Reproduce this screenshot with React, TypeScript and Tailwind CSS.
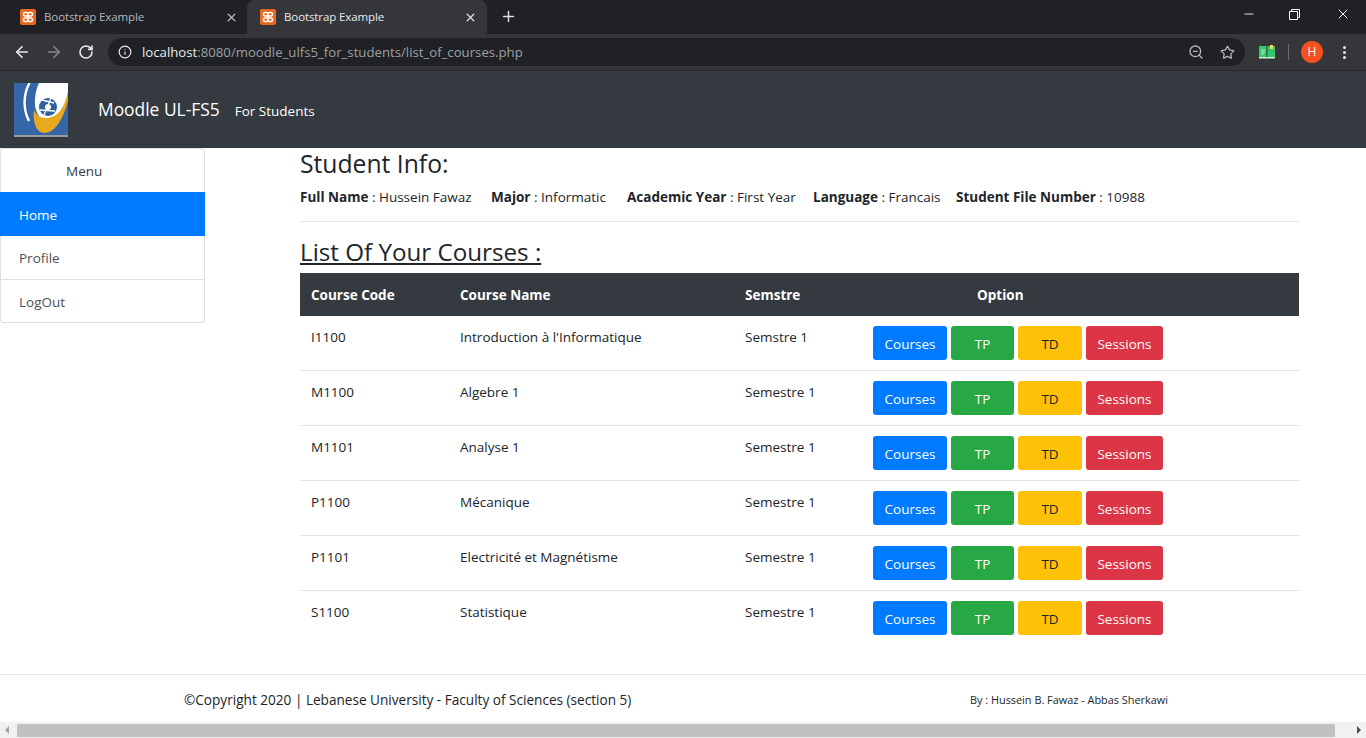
import { ArrowLeft, ArrowRight, Info, Minus, Plus, RotateCw, Star, X, ZoomOut } from 'lucide-react';

const courses = [
  { code: 'I1100', name: "Introduction à l'Informatique", semester: 'Semstre 1' },
  { code: 'M1100', name: 'Algebre 1', semester: 'Semestre 1' },
  { code: 'M1101', name: 'Analyse 1', semester: 'Semestre 1' },
  { code: 'P1100', name: 'Mécanique', semester: 'Semestre 1' },
  { code: 'P1101', name: 'Electricité et Magnétisme', semester: 'Semestre 1' },
  { code: 'S1100', name: 'Statistique', semester: 'Semestre 1' },
];

function Favicon() {
  return (
    <svg width="16" height="16" viewBox="0 0 16 16" className="shrink-0">
      <rect width="16" height="16" rx="2" fill="#e8691f" />
      <path d="M5 3.5h1.5a1.5 1.5 0 0 1 1.5 1.5v6a1.5 1.5 0 0 0 1.5 1.5H11a1.5 1.5 0 0 0 1.5-1.5v-.5A1.5 1.5 0 0 0 11 9H5a1.5 1.5 0 0 0-1.5 1.5v.5A1.5 1.5 0 0 0 5 12.5h1.5A1.5 1.5 0 0 0 8 11V5a1.5 1.5 0 0 1 1.5-1.5H11A1.5 1.5 0 0 1 12.5 5v.5A1.5 1.5 0 0 1 11 7H5a1.5 1.5 0 0 1-1.5-1.5V5A1.5 1.5 0 0 1 5 3.5Z" fill="none" stroke="#fff" strokeWidth="1.5" />
    </svg>
  );
}

function Logo() {
  return (
    <svg width="54" height="54" viewBox="0 0 54 54" className="shrink-0">
      <rect width="54" height="54" fill="#ffffff" />
      <rect y="0" width="54" height="52" fill="#3566a8" />
      <path d="M25 0 H54 V10 C50 28 42 38 32 38 C24 36 20 26 21 16 C21.5 9 23 4 25 0 Z" fill="#ffffff" />
      <path d="M15.5 0 C9 12 9 26 15 38" fill="none" stroke="#ffffff" strokeWidth="2.4" />
      <path d="M54 8 C51 25 43 35 32 35 C26 35 22 32 20 27 C18 39 23 50 30 50 C43 50 50 32 54 18 Z" fill="#e9a91c" />
      <circle cx="34" cy="24" r="9" fill="#2f619f" />
      <circle cx="34" cy="24" r="3" fill="#ffffff" />
      <path d="M28 17 L40 20 M30 32 L37 15 M26 27 L41 28" stroke="#ffffff" strokeWidth="1.3" />
      <rect y="52" width="54" height="2" fill="#9a9a9a" />
    </svg>
  );
}

function BookIcon() {
  return (
    <svg width="16" height="14" viewBox="0 0 16 14">
      <path d="M0 1h7.5v11H0zM8.5 1H16v11H8.5z" fill="#34c66a" />
      <path d="M0 12h16v1.5H0z" fill="#c8f5d6" />
      <path d="M11 0h3v4h-3z" fill="#f5d65a" />
      <path d="M2 5h4M2 7h4M2 9h3" stroke="#a6eec0" strokeWidth="1" />
    </svg>
  );
}

function Tab({ active }: { active?: boolean }) {
  return (
    <div className={active ? 'flex h-[34px] w-[240px] items-center rounded-t-lg bg-[#35363a] pl-[13px] pr-[10px]' : 'flex h-[34px] w-[247px] items-center pl-[20px] pr-[9px]'}>
      <Favicon />
      <span className={active ? 'ml-[8px] flex-1 text-[11.5px] tracking-[-0.1px] text-[#e8eaed]' : 'ml-[8px] flex-1 text-[11.5px] tracking-[-0.1px] text-[#b4b7bb]'}>Bootstrap Example</span>
      <X size={13} strokeWidth={2.4} className={active ? 'text-[#dfe1e5]' : 'text-[#b4b7bb]'} />
    </div>
  );
}

function BrowserBar() {
  return (
    <div className="shrink-0">
      <div className="flex h-[34px] items-start bg-[#202124]">
        <Tab />
        <Tab active />
        <Plus size={17} strokeWidth={2} className="ml-[13px] mt-[8px] text-[#dfe1e5]" />
        <div className="ml-auto flex h-[28px] items-center text-white">
          <Minus size={14} strokeWidth={1.5} className="mr-[33px]" />
          <svg width="11" height="11" viewBox="0 0 11 11" className="mr-[35px]" fill="none" stroke="currentColor">
            <path d="M.5 2.5h8v8h-8zM2.5 2.5v-2h8v8h-2" />
          </svg>
          <X size={16} strokeWidth={1.4} className="mr-[15px]" />
        </div>
      </div>
      <div className="flex h-[37px] items-start border-b border-[#27282b] bg-[#35363a] pt-[4px]">
        <ArrowLeft size={18} strokeWidth={2.2} className="ml-[13px] mt-[5px] text-[#e8eaed]" />
        <ArrowRight size={18} strokeWidth={2.2} className="ml-[14px] mt-[5px] text-[#85878a]" />
        <RotateCw size={16} strokeWidth={2.4} className="ml-[15px] mt-[6px] text-[#e8eaed]" />
        <div className="ml-[14px] flex h-[28px] w-[1137px] items-center rounded-full bg-[#202124] pl-[10px] pr-[10px]">
          <Info size={14} strokeWidth={2} className="text-[#e8eaed]" />
          <span className="ml-[10px] mt-[1px] text-[13.2px] text-[#e8eaed]">
            localhost<span className="text-[#9aa0a6]">:8080/moodle_ulfs5_for_students/list_of_courses.php</span>
          </span>
          <ZoomOut size={16} strokeWidth={2} className="ml-auto text-[#b4b7bb]" />
          <Star size={15} strokeWidth={2} className="ml-[16px] text-[#b4b7bb]" />
        </div>
        <div className="ml-[14px] mt-[7px]"><BookIcon /></div>
        <div className="ml-[13px] mt-[6px] h-[16px] w-px bg-[#6a6b6e]" />
        <div className="ml-[12px] mt-[3px] flex h-[22px] w-[22px] items-center justify-center rounded-full bg-[#f4511e] text-[12px] text-white">H</div>
        <div className="ml-[20px] mt-[8px] flex flex-col gap-[2px]">
          <span className="h-[3px] w-[3px] rounded-full bg-[#e8eaed]" />
          <span className="h-[3px] w-[3px] rounded-full bg-[#e8eaed]" />
          <span className="h-[3px] w-[3px] rounded-full bg-[#e8eaed]" />
        </div>
      </div>
    </div>
  );
}

function Sidebar() {
  return (
    <div className="h-[175px] w-[205px] shrink-0 rounded-[3px] border border-[#dfdfdf] text-[13.5px] text-[#495057]">
      <div className="flex h-[43px] items-center pl-[65px] pt-[1px] text-[#343a40]">Menu</div>
      <div className="-mx-px flex h-[44px] items-center bg-[#007bff] pl-[19px] pt-[2px] text-white">Home</div>
      <div className="flex h-[44px] items-center border-b border-[#dfdfdf] pl-[18px] pt-[1px]">Profile</div>
      <div className="flex h-[43px] items-center pl-[18px] pt-[2px]">LogOut</div>
    </div>
  );
}

function StudentInfo() {
  return (
    <>
      <h2 className="h-[33px] text-[24.7px] leading-[32px] text-[#212529]">Student Info:</h2>
      <div className="mt-[7px] flex h-[18px] items-center text-[13.5px] leading-[18px] text-[#212529]">
        <span className="w-[191px]"><b>Full Name</b> : Hussein Fawaz</span>
        <span className="w-[136px]"><b>Major</b> : Informatic</span>
        <span className="w-[186px]"><b>Academic Year</b> : First Year</span>
        <span className="w-[143px]"><b>Language</b> : Francais</span>
        <span><b>Student File Number</b> : 10988</span>
      </div>
      <hr className="mt-[15px] border-[#e6e6e6]" />
    </>
  );
}

function CourseTable() {
  return (
    <table className="w-[999px] table-fixed border-collapse text-[13.5px] text-[#212529]">
      <thead>
        <tr className="h-[43px] bg-[#343a40] text-left text-white">
          <th className="w-[149px] pl-[11px] pt-[2px] font-bold">Course Code</th>
          <th className="w-[286px] pl-[11px] pt-[2px] font-bold">Course Name</th>
          <th className="w-[127px] pl-[10px] pt-[2px] font-bold">Semstre</th>
          <th className="pl-[115px] pt-[2px] font-bold">Option</th>
        </tr>
      </thead>
      <tbody>
        {courses.map((course, i) => (
          <tr key={course.code} className={i === 0 ? 'h-[54px] border-b border-[#dee2e6] align-top' : i < courses.length - 1 ? 'h-[55px] border-b border-[#dee2e6] align-top' : 'h-[55px] align-top'}>
            <td className="pl-[11px] pt-[12px] leading-[18px]">{course.code}</td>
            <td className="pl-[11px] pt-[12px] leading-[18px]">{course.name}</td>
            <td className="pl-[10px] pt-[12px] leading-[18px]">{course.semester}</td>
            <td className="pl-[11px] pt-[10px]">
              <div className="flex gap-[4px] leading-[36px]">
                <span className="h-[34px] w-[74px] rounded-[3px] bg-[#007bff] text-center text-white">Courses</span>
                <span className="h-[34px] w-[63px] rounded-[3px] bg-[#28a745] text-center text-white">TP</span>
                <span className="h-[34px] w-[64px] rounded-[3px] bg-[#ffc107] text-center text-[#212529]">TD</span>
                <span className="h-[34px] w-[77px] rounded-[3px] bg-[#dc3545] text-center text-white">Sessions</span>
              </div>
            </td>
          </tr>
        ))}
      </tbody>
    </table>
  );
}

export default function App() {
  return (
    <div className="flex h-[738px] w-[1366px] flex-col overflow-hidden bg-white font-['Open_Sans','Liberation_Sans',sans-serif]">
      <BrowserBar />
      <header className="flex h-[77px] shrink-0 items-center bg-[#343a40] pl-[14px] text-white">
        <Logo />
        <span className="ml-[30px] text-[17.4px]">Moodle UL-FS5</span>
        <span className="ml-[15px] mt-[3px] text-[13.5px]">For Students</span>
      </header>
      <main className="flex h-[526px] shrink-0 items-start">
        <Sidebar />
        <div className="ml-[95px] w-[999px]">
          <StudentInfo />
          <h2 className="mt-[11px] h-[40px] text-[24.2px] leading-[38px] text-[#212529] underline underline-offset-2">List Of Your Courses :</h2>
          <CourseTable />
        </div>
      </main>
      <footer className="flex h-[48px] shrink-0 items-center border-t border-[#e6e6e6] pt-[4px] text-[#212529]">
        <span className="ml-[184px] text-[13.6px]">©Copyright 2020 | Lebanese University - Faculty of Sciences (section 5)</span>
        <span className="ml-auto mr-[198px] text-[10.9px]">By : Hussein B. Fawaz - Abbas Sherkawi</span>
      </footer>
      <div className="flex h-[16px] shrink-0 items-center bg-[#f1f1f1]">
        <span className="ml-[5px] h-0 w-0 border-y-[4px] border-r-[4px] border-y-transparent border-r-[#a3a3a3]" />
        <div className="ml-[8px] h-[13px] w-[1318px] bg-[#c1c1c1]" />
        <span className="ml-auto mr-[5px] h-0 w-0 border-y-[4px] border-l-[4px] border-y-transparent border-l-[#505050]" />
      </div>
    </div>
  );
}
